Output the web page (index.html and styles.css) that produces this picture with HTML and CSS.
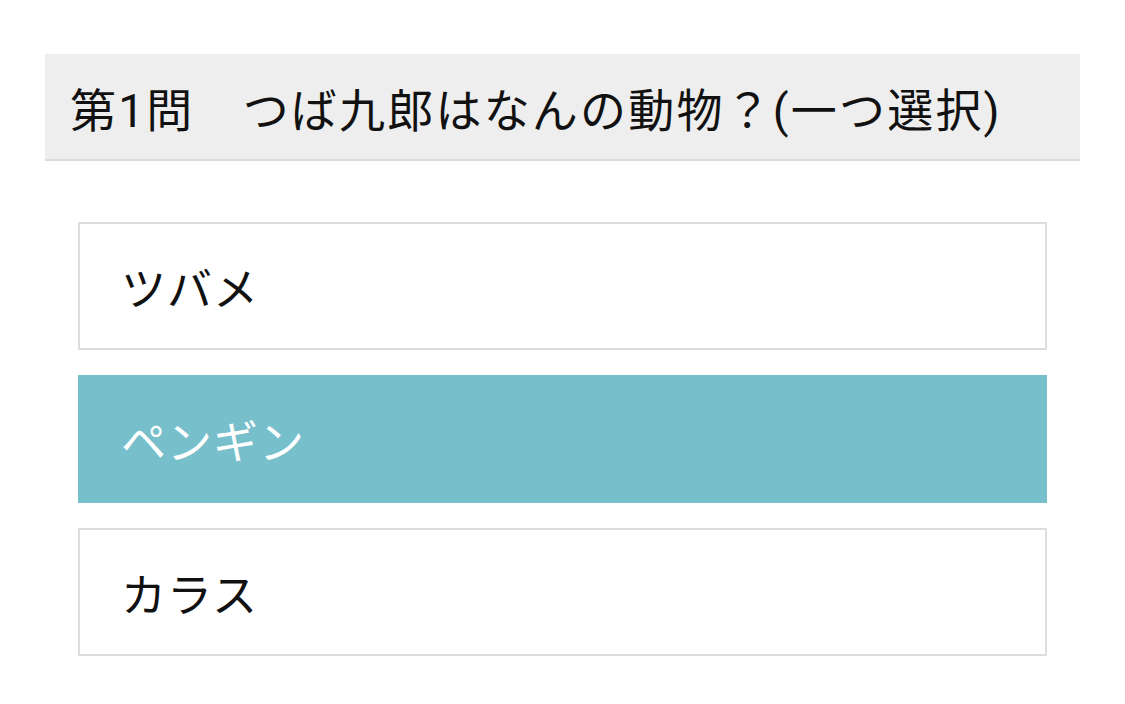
FILE: index.html
```html
<!DOCTYPE html>
<html lang="ja">
<head>
<meta charset="utf-8">
<link rel="stylesheet" href="styles.css">
</head>
<body>
<div class="page">
  <div class="question">第1問　つば九郎はなんの動物？(一つ選択)</div>
  <ul class="choices">
    <li class="choice">ツバメ</li>
    <li class="choice selected">ペンギン</li>
    <li class="choice">カラス</li>
  </ul>
</div>
</body>
</html>
```

FILE: styles.css
```css
html, body {
  margin: 0;
  padding: 0;
  background: #ffffff;
}
body {
  font-family: Roboto, "Noto Sans CJK JP", sans-serif;
  color: #111111;
}
.page {
  padding: 54px 45px 0 45px;
}
.question {
  background: #eeeeee;
  border-bottom: 2px solid #dcdcdc;
  height: 105px;
  display: flex;
  align-items: center;
  padding-left: 25px;
  font-size: 46px;
  letter-spacing: 2.2px;
  white-space: nowrap;
}
.choices {
  list-style: none;
  margin: 61px 33px 0 33px;
  padding: 0;
  display: flex;
  flex-direction: column;
  gap: 25px;
}
.choice {
  box-sizing: border-box;
  height: 128px;
  border: 2px solid #dddddd;
  background: #ffffff;
  display: flex;
  align-items: center;
  padding-left: 41px;
  font-size: 45px;
  letter-spacing: 1px;
}
.choice.selected {
  background: #78bfcc;
  border-color: #78bfcc;
  color: #ffffff;
}
```
